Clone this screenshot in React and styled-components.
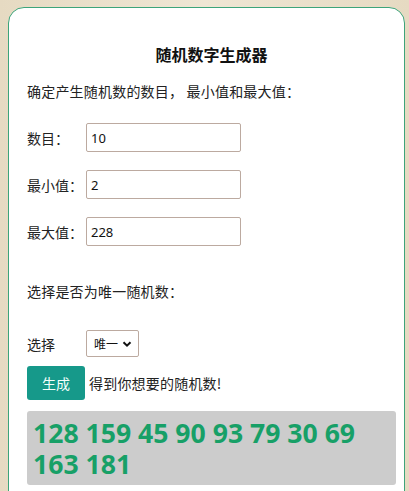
import React, { useState } from 'react';
import styled, { createGlobalStyle } from 'styled-components';

const GlobalStyle = createGlobalStyle`
  html, body {
    margin: 0;
    padding: 0;
  }
  body {
    background: linear-gradient(90deg, #e6dac2 0%, #efe6d4 50%, #e6dac2 100%);
    font-family: "Noto Sans CJK SC", "Noto Sans", sans-serif;
    height: 491px;
    overflow: hidden;
  }
`;

const Page = styled.div`
  padding: 7px 4px 0 8px;
`;

const Card = styled.div`
  background: #fff;
  border: 1px solid #3da47a;
  border-radius: 16px;
  padding: 34px 8px 40px 18px;
  min-height: 520px;
  box-sizing: border-box;
`;

const Title = styled.h1`
  margin: 0 0 14px;
  font-size: 16px;
  font-weight: 700;
  text-align: center;
  color: #111;
  line-height: 24px;
`;

const Text = styled.p`
  margin: 0;
  font-size: 14px;
  color: #222;
  line-height: 22px;
  letter-spacing: 0.2px;
`;

const Form = styled.div`
  display: flex;
  flex-direction: column;
  gap: 18px;
  margin-top: 21px;
`;

const Row = styled.label`
  display: flex;
  align-items: center;
  font-size: 14px;
  color: #222;
`;

const Label = styled.span`
  width: 59px;
  flex-shrink: 0;
`;

const Input = styled.input`
  width: 155px;
  height: 29px;
  box-sizing: border-box;
  border: 1px solid #bcaaa0;
  border-radius: 2px;
  padding: 0 4px;
  font-size: 13px;
  font-family: "Noto Sans", sans-serif;
  color: #111;
  outline: none;
`;

const Section = styled.div`
  margin-top: ${(p) => p.$top}px;
`;

const Select = styled.div`
  display: flex;
  align-items: center;
  gap: 4px;
  height: 27px;
  width: 53px;
  box-sizing: border-box;
  border: 1px solid #bcaaa0;
  border-radius: 2px;
  padding: 0 4px 0 7px;
  font-size: 12px;
  color: #111;
`;

const Actions = styled.div`
  display: flex;
  align-items: center;
  gap: 4px;
  margin-top: 9px;
`;

const Button = styled.button`
  width: 58px;
  height: 34px;
  background: #16998a;
  color: #f4fffc;
  border: none;
  border-radius: 3px;
  font-size: 14px;
  font-family: "Noto Sans CJK SC", sans-serif;
  cursor: pointer;
`;

const Result = styled.div`
  margin-top: 11px;
  background: #cccccc;
  border-radius: 3px;
  padding: 7px 6px 5px;
  font-family: "Open Sans", "Noto Sans", sans-serif;
  font-weight: 700;
  font-size: 26.6px;
  line-height: 31px;
  color: #17a067;
`;

const App = () => {
  const [count, setCount] = useState('10');
  const [min, setMin] = useState('2');
  const [max, setMax] = useState('228');
  const numbers = [128, 159, 45, 90, 93, 79, 30, 69, 163, 181];

  return (
    <Page>
      <GlobalStyle />
      <Card>
        <Title>随机数字生成器</Title>
        <Text>确定产生随机数的数目， 最小值和最大值：</Text>
        <Form>
          <Row>
            <Label>数目：</Label>
            <Input value={count} onChange={(e) => setCount(e.target.value)} />
          </Row>
          <Row>
            <Label>最小值：</Label>
            <Input value={min} onChange={(e) => setMin(e.target.value)} />
          </Row>
          <Row>
            <Label>最大值：</Label>
            <Input value={max} onChange={(e) => setMax(e.target.value)} />
          </Row>
        </Form>
        <Section $top={34}>
          <Text>选择是否为唯一随机数：</Text>
        </Section>
        <Section $top={28}>
          <Row>
            <Label>选择</Label>
            <Select>
              唯一
              <svg width="10" height="10" viewBox="0 0 10 10">
                <path d="M1.5 3.2 L5 6.7 L8.5 3.2" fill="none" stroke="#111" strokeWidth="2" />
              </svg>
            </Select>
          </Row>
        </Section>
        <Actions>
          <Button>生成</Button>
          <Text>得到你想要的随机数!</Text>
        </Actions>
        <Result>{numbers.join(' ')}</Result>
      </Card>
    </Page>
  );
};

export default App;
